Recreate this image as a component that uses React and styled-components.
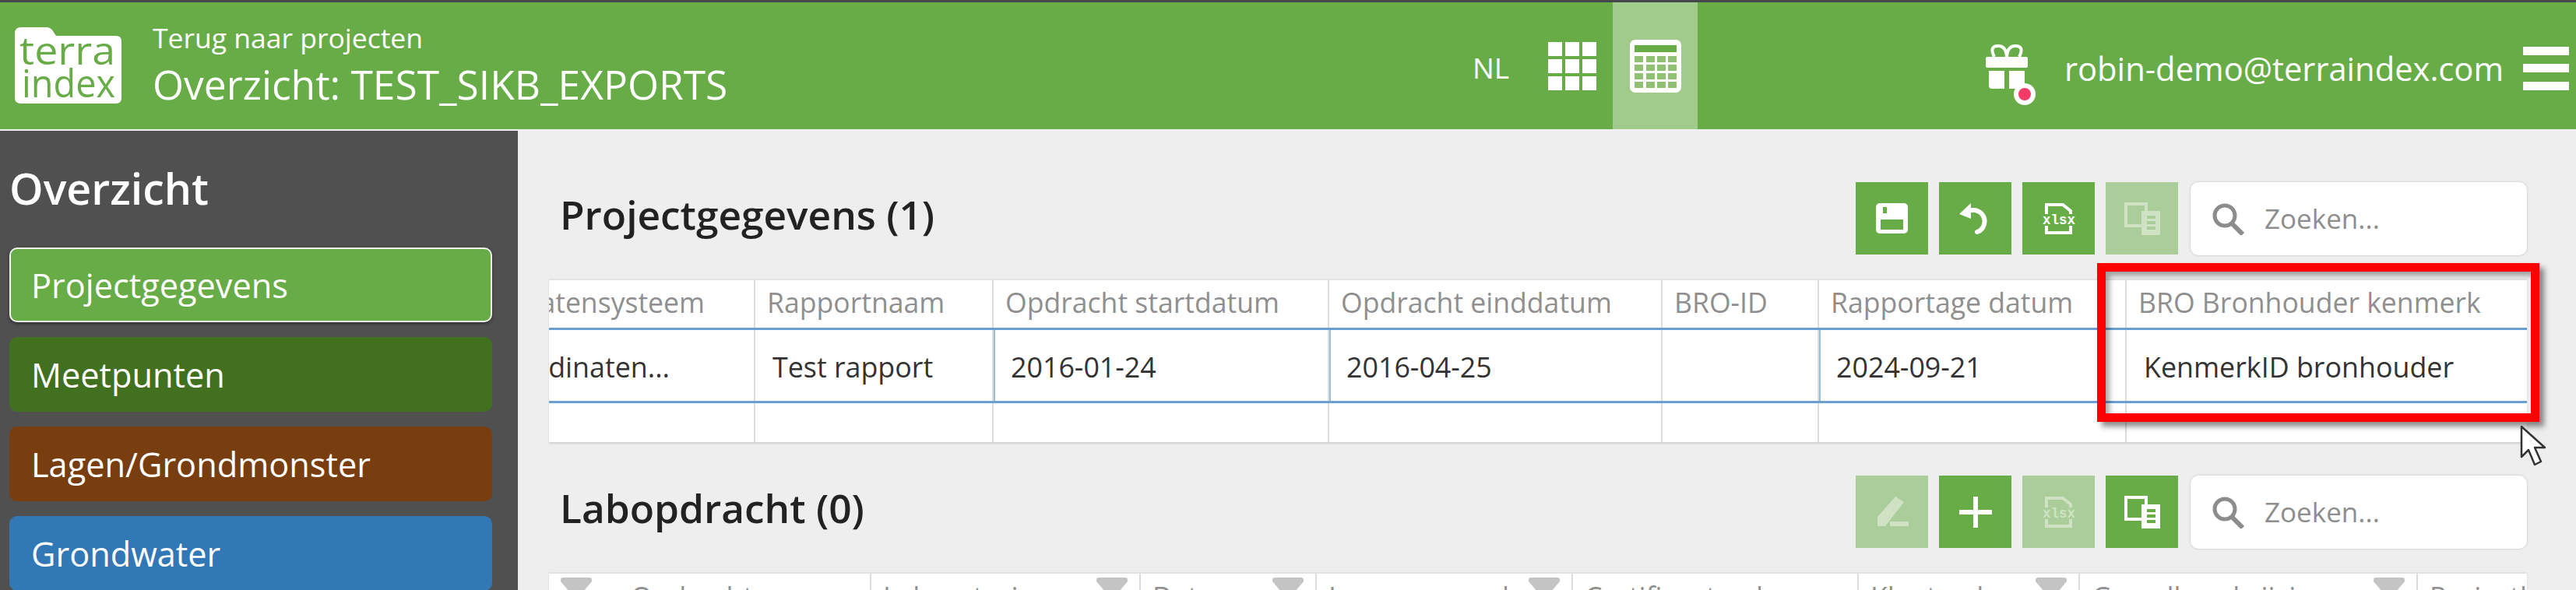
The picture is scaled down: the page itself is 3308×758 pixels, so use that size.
import React from "react";
import styled, { createGlobalStyle } from "styled-components";

const FONT = `"Open Sans", "Noto Sans", "Liberation Sans", sans-serif`;
const GREEN = "#68ac47";
const FADED = "#abcd9a";

const Global = createGlobalStyle`
  html, body { margin: 0; padding: 0; background: #eeeeee; }
  body { font-family: ${FONT}; overflow: hidden; }
  * { box-sizing: border-box; }
`;

const Page = styled.div`
  position: relative;
  width: 3308px;
  height: 758px;
  overflow: hidden;
  display: flex;
  flex-direction: column;
`;

const TopBar = styled.header`
  flex: 0 0 168px;
  display: flex;
  align-items: stretch;
  background: ${GREEN};
  border-top: 3px solid #45484a;
  border-bottom: 2px solid #f3f0f3;
  color: #fff;
`;

const Brand = styled.div`
  flex: 0 0 196px;
  padding: 32px 0 0 19px;
`;

const Titles = styled.div`
  flex: 0 0 1695px;
  padding-top: 21px;
`;

const BackLink = styled.div`
  font-size: 35.5px;
  line-height: 48px;
`;

const PageTitle = styled.div`
  font-size: 51.5px;
  line-height: 70px;
  margin-top: 1px;
`;

const ViewGroup = styled.div`
  flex: 0 0 459px;
  display: flex;
  align-items: center;
`;

const Lang = styled.span`
  font-size: 37px;
  width: 76px;
  margin-top: 3px;
`;

const ViewToggle = styled.div`
  width: ${(p) => p.$w}px;
  align-self: stretch;
  display: flex;
  align-items: center;
  justify-content: center;
  background: ${(p) => (p.$active ? "#a0cb8b" : "transparent")};
  padding-top: ${(p) => p.$pt || 0}px;
`;

const UserGroup = styled.div`
  flex: 1;
  display: flex;
  align-items: center;
  padding-left: 200px;
`;

const Email = styled.span`
  font-size: 41.7px;
  margin: 5px 0 0 31px;
  width: 589px;
  white-space: nowrap;
`;

const MenuButton = styled.div`
  display: flex;
  margin-top: 7px;
`;

const Body = styled.div`
  flex: 1;
  display: flex;
  min-height: 0;
`;

const Sidebar = styled.aside`
  flex: 0 0 665px;
  background: #505050;
  padding: 0 33px 0 12px;
`;

const SideTitle = styled.h2`
  margin: 33px 0 35px;
  font-size: 55.5px;
  line-height: 82px;
  font-weight: 600;
  color: #fff;
`;

const NavItem = styled.div`
  height: 96px;
  margin-bottom: 19px;
  display: flex;
  align-items: center;
  font-size: 43.3px;
  color: #fff;
  background: ${(p) => p.$bg};
  border-radius: 10px;
  border: ${(p) => (p.$active ? "2px solid #f0f5ec" : "none")};
  padding-left: ${(p) => (p.$active ? 26 : 28)}px;
  box-shadow: ${(p) => (p.$active ? "0 2px 4px rgba(0,0,0,.4)" : "none")};
`;

const Content = styled.main`
  flex: 1;
  min-width: 0;
  padding: 66px 63px 0 40px;
  background: #eeeeee;
`;

const SectionHead = styled.div`
  display: flex;
  align-items: center;
  gap: 14px;
  height: 93px;
`;

const SectionTitle = styled.h3`
  margin: 0 auto 12px 14px;
  font-size: 51.4px;
  font-weight: 600;
  color: #222;
`;

const ActionButton = styled.div`
  width: 93px;
  height: 93px;
  display: flex;
  align-items: center;
  justify-content: center;
  background: ${(p) => (p.$faded ? FADED : GREEN)};
`;

const Search = styled.div`
  width: 432px;
  height: 94px;
  margin-left: 2px;
  display: flex;
  align-items: center;
  gap: 26px;
  padding-left: 27px;
  background: #fff;
  border-radius: 10px;
  box-shadow: 0 0 3px rgba(0, 0, 0, 0.2);
  font-size: 35px;
  color: #8e8e8e;
`;

const Table = styled.div`
  margin-top: 31px;
  background: #fff;
  border-top: 2px solid #e2e2e2;
  box-shadow: 0 2px 2px rgba(0, 0, 0, 0.12);
  margin-bottom: ${(p) => p.$mb || 0}px;
`;

const Row = styled.div`
  display: grid;
  grid-template-columns: ${(p) => p.$cols};
  height: ${(p) => p.$h}px;
  border-bottom: ${(p) => p.$line || "none"};
`;

const HeadCell = styled.div`
  display: flex;
  align-items: center;
  justify-content: ${(p) => (p.$clipEnd ? "flex-end" : "flex-start")};
  padding: ${(p) => (p.$clipEnd ? "0 63px 5px 0" : "0 0 5px 15px")};
  overflow: hidden;
  white-space: nowrap;
  font-size: 35.6px;
  color: #8f8f8f;
  border-right: ${(p) => (p.$last ? "none" : "2px solid #dcdcdc")};
`;

const DataCell = styled.div`
  display: flex;
  align-items: center;
  justify-content: ${(p) => (p.$clipEnd ? "flex-end" : "flex-start")};
  padding: ${(p) => (p.$clipEnd ? "2px 108px 0 0" : "2px 0 0 22px")};
  overflow: hidden;
  white-space: nowrap;
  font-size: 35.8px;
  color: #333;
  border-right: ${(p) => (p.$last ? "none" : "2px solid #dcdcdc")};
  box-shadow: ${(p) => (p.$edit ? "inset 2px 0 0 #9dbcd6" : "none")};
`;

const FilterCell = styled.div`
  display: flex;
  align-items: flex-start;
  padding: 5px 15px 0 15px;
  overflow: hidden;
  white-space: nowrap;
  font-size: 35.6px;
  color: #8f8f8f;
  border-right: ${(p) => (p.$last ? "none" : "2px solid #dcdcdc")};
`;

const FilterLabel = styled.span`
  margin: 2px auto 0 ${(p) => p.$ml || 0}px;
  line-height: 44px;
`;

const RedBox = styled.div`
  position: absolute;
  left: 2693px;
  top: 338px;
  width: 568px;
  height: 204px;
  border: 11px solid #fe0000;
  box-shadow: 6px 6px 7px rgba(0, 0, 0, 0.45), inset 5px 5px 7px rgba(0, 0, 0, 0.35);
`;

const Cursor = styled.svg`
  position: absolute;
  left: 3236px;
  top: 546px;
`;

const LogoText = styled.text`
  font-family: "Open Sans", "DejaVu Sans", sans-serif;
  font-size: 50px;
  font-weight: 400;
  fill: ${GREEN};
`;

const Logo = () => (
  <svg width="138" height="99" viewBox="0 0 138 99">
    <path d="M8 0H40Q46 0 49 5L53 11H130Q137 11 137 18V91Q137 98 130 98H8Q0 98 0 91V8Q0 0 8 0Z" fill="#fff" />
    <LogoText x="6" y="48" textLength="123" lengthAdjust="spacingAndGlyphs">terra</LogoText>
    <LogoText x="9" y="90" textLength="120" lengthAdjust="spacingAndGlyphs">index</LogoText>
  </svg>
);

const GridIcon = () => (
  <svg width="62" height="62" viewBox="0 0 62 62" fill="#fff">
    {[0, 22, 44].map((y) =>
      [0, 22, 44].map((x) => <rect key={`${x}-${y}`} x={x} y={y} width="18" height="18" />)
    )}
  </svg>
);

const TableIcon = () => (
  <svg width="66" height="68" viewBox="0 0 66 68">
    <rect width="66" height="68" rx="7" fill="#fff" />
    <rect x="6" y="7" width="54" height="9" fill={GREEN} />
    {[21, 32, 43, 54].map((y) =>
      [6, 21, 35, 49].map((x) => <rect key={`${x}-${y}`} x={x} y={y} width="11" height="8" fill="#8fc073" />)
    )}
  </svg>
);

const GiftIcon = () => (
  <svg width="70" height="80" viewBox="0 0 70 80">
    <path d="M11 17Q4 3 16 3Q26 3 27 17Q28 3 38 3Q50 3 43 17" fill="none" stroke="#fff" strokeWidth="4" />
    <rect x="0" y="17" width="54" height="14" rx="2" fill="#fff" />
    <path d="M4 35H24V58H8Q4 58 4 54Z" fill="#fff" />
    <path d="M30 35H50V54Q50 58 46 58H30Z" fill="#fff" />
    <circle cx="50" cy="65" r="14" fill="#fff" />
    <circle cx="50" cy="65" r="8" fill="#f23c66" />
  </svg>
);

const Hamburger = () => (
  <svg width="59" height="56" viewBox="0 0 59 56" fill="#fff">
    <rect y="0" width="59" height="11" />
    <rect y="22" width="59" height="11" />
    <rect y="45" width="59" height="11" />
  </svg>
);

const SaveIcon = () => (
  <svg width="42" height="40" viewBox="0 0 42 40">
    <rect width="41" height="39" rx="5" fill="#fff" />
    <rect x="9" y="5" width="5" height="8" fill={GREEN} />
    <rect x="6" y="21" width="29" height="13" fill={GREEN} />
  </svg>
);

const UndoIcon = () => (
  <svg width="42" height="40" viewBox="0 0 42 40">
    <path d="M0 14L15 0V20Z" fill="#fff" />
    <path d="M12 9H20A14.5 14.5 0 0 1 23 37" fill="none" stroke="#fff" strokeWidth="6" strokeLinecap="round" />
  </svg>
);

const XlsText = styled.text`
  font-family: "Liberation Mono", monospace;
  font-size: 18px;
  font-weight: 700;
`;

const XlsxIcon = ({ color = "#fff", band = GREEN }) => (
  <svg width="42" height="40" viewBox="0 0 42 40">
    <path d="M5 14V2H26L36 10V14M5 29V38H36V29" fill="none" stroke={color} strokeWidth="4" />
    <rect x="0" y="14" width="42" height="14" fill={band} />
    <XlsText x="0" y="27" fill={color} textLength="42" lengthAdjust="spacingAndGlyphs">xlsx</XlsText>
  </svg>
);

const CopyIcon = ({ color = "#fff", bg = GREEN }) => (
  <svg width="46" height="42" viewBox="0 0 46 42">
    <path d="M2 2H28V30H2Z" fill="none" stroke={color} strokeWidth="4" />
    <rect x="22" y="11" width="24" height="31" fill={color} />
    <rect x="29" y="17" width="11" height="4" fill={bg} />
    <rect x="29" y="24" width="11" height="4" fill={bg} />
    <rect x="29" y="31" width="11" height="4" fill={bg} />
  </svg>
);

const PencilIcon = () => (
  <svg width="42" height="40" viewBox="0 0 42 40" fill="#cfe3c4">
    <path d="M25 0L36 7L12 38H2V26Z" />
    <rect x="18" y="32" width="24" height="6" />
  </svg>
);

const PlusIcon = () => (
  <svg width="42" height="40" viewBox="0 0 42 40" fill="#fff">
    <rect x="18" y="0" width="6" height="40" />
    <rect x="0" y="17" width="42" height="6" />
  </svg>
);

const SearchIcon = () => (
  <svg width="42" height="42" viewBox="0 0 42 42" fill="none" stroke="#8c8c8c">
    <circle cx="17" cy="17" r="13" strokeWidth="5" />
    <path d="M26 27L40 41" strokeWidth="6" />
  </svg>
);

const Funnel = () => (
  <svg width="40" height="22" viewBox="0 0 40 22">
    <path d="M3 0H37Q40 0 40 3V5L29 18V22H11V18L0 5V3Q0 0 3 0Z" fill="#c4c4c4" />
  </svg>
);

const ArrowCursor = () => (
  <Cursor width="36" height="54" viewBox="0 0 36 54">
    <path
      d="M2 2V41L11 32L19 51L27 47L19 29H32Z"
      fill="#fff"
      stroke="#333"
      strokeWidth="2.5"
      strokeLinejoin="round"
    />
  </Cursor>
);

const PROJECT_COLS = "265px 306px 431px 428px 201px 395px 515px";
const LAB_COLS = "414px 346px 226px 329px 367px 284px 434px 140px";

const projectColumns = [
  { head: "Coördinatensysteem", cell: "Coördinaten...", clipEnd: true },
  { head: "Rapportnaam", cell: "Test rapport" },
  { head: "Opdracht startdatum", cell: "2016-01-24", edit: true },
  { head: "Opdracht einddatum", cell: "2016-04-25", edit: true },
  { head: "BRO-ID", cell: "" },
  { head: "Rapportage datum", cell: "2024-09-21", edit: true },
  { head: "BRO Bronhouder kenmerk", cell: "KenmerkID bronhouder", last: true },
];

const labColumns = [
  { label: "Opdrachtnaam", leading: true },
  { label: "Laboratorium", filter: true },
  { label: "Datum", filter: true },
  { label: "Lnummer code", filter: true },
  { label: "Certificaatcode" },
  { label: "Klantcode", filter: true },
  { label: "Grondbeschrijving", filter: true },
  { label: "Projectleider", last: true },
];

const navItems = [
  { label: "Projectgegevens", bg: GREEN, active: true },
  { label: "Meetpunten", bg: "#41711f" },
  { label: "Lagen/Grondmonster", bg: "#783e10" },
  { label: "Grondwater", bg: "#3378b6" },
];

export default function App() {
  return (
    <Page>
      <Global />
      <TopBar>
        <Brand>
          <Logo />
        </Brand>
        <Titles>
          <BackLink>Terug naar projecten</BackLink>
          <PageTitle>Overzicht: TEST_SIKB_EXPORTS</PageTitle>
        </Titles>
        <ViewGroup>
          <Lang>NL</Lang>
          <ViewToggle $w={104}>
            <GridIcon />
          </ViewToggle>
          <ViewToggle $w={109} $active>
            <TableIcon />
          </ViewToggle>
        </ViewGroup>
        <UserGroup>
          <ViewToggle $w={70} $pt={22}>
            <GiftIcon />
          </ViewToggle>
          <Email>robin-demo@terraindex.com</Email>
          <MenuButton>
            <Hamburger />
          </MenuButton>
        </UserGroup>
      </TopBar>
      <Body>
        <Sidebar>
          <SideTitle>Overzicht</SideTitle>
          {navItems.map((n) => (
            <NavItem key={n.label} $bg={n.bg} $active={n.active}>
              {n.label}
            </NavItem>
          ))}
        </Sidebar>
        <Content>
          <SectionHead>
            <SectionTitle>Projectgegevens (1)</SectionTitle>
            <ActionButton><SaveIcon /></ActionButton>
            <ActionButton><UndoIcon /></ActionButton>
            <ActionButton><XlsxIcon /></ActionButton>
            <ActionButton $faded><CopyIcon color="#cfe3c4" bg={FADED} /></ActionButton>
            <Search><SearchIcon />Zoeken...</Search>
          </SectionHead>
          <Table $mb={43}>
            <Row $cols={PROJECT_COLS} $h={64} $line="3px solid #6a9fd0">
              {projectColumns.map((c) => (
                <HeadCell key={c.head} $clipEnd={c.clipEnd} $last={c.last}>{c.head}</HeadCell>
              ))}
            </Row>
            <Row $cols={PROJECT_COLS} $h={94} $line="3px solid #6a9fd0">
              {projectColumns.map((c) => (
                <DataCell key={c.head} $clipEnd={c.clipEnd} $last={c.last} $edit={c.edit}>{c.cell}</DataCell>
              ))}
            </Row>
            <Row $cols={PROJECT_COLS} $h={50}>
              {projectColumns.map((c) => (
                <DataCell key={c.head} $last={c.last} />
              ))}
            </Row>
          </Table>
          <SectionHead>
            <SectionTitle>Labopdracht (0)</SectionTitle>
            <ActionButton $faded><PencilIcon /></ActionButton>
            <ActionButton><PlusIcon /></ActionButton>
            <ActionButton $faded><XlsxIcon color="#cfe3c4" band={FADED} /></ActionButton>
            <ActionButton><CopyIcon /></ActionButton>
            <Search><SearchIcon />Zoeken...</Search>
          </SectionHead>
          <Table>
            <Row $cols={LAB_COLS} $h={60}>
              {labColumns.map((c) => (
                <FilterCell key={c.label} $last={c.last}>
                  {c.leading && <Funnel />}
                  <FilterLabel $ml={c.leading ? 50 : 0}>{c.label}</FilterLabel>
                  {c.filter && <Funnel />}
                </FilterCell>
              ))}
            </Row>
          </Table>
        </Content>
      </Body>
      <RedBox />
      <ArrowCursor />
    </Page>
  );
}
